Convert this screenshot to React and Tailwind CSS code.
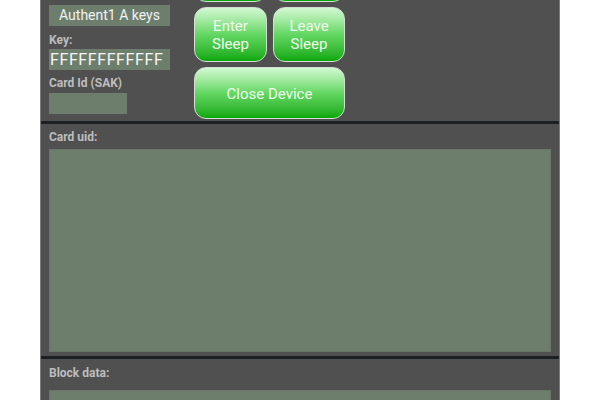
const font = { fontFamily: "Roboto, 'Noto Sans', sans-serif" };

function GreenButton({ className = "", children }) {
  return (
    <div
      className={`flex items-center justify-center rounded-[12px] border-[1.5px] border-[#d6dcd6] bg-gradient-to-b from-[#d2f8d2] via-[#62d762] to-[#05a805] text-center text-[15px] leading-[18px] text-[#eefdee] ${className}`}
    >
      {children}
    </div>
  );
}

function Field({ className = "", children }) {
  return (
    <div className={`bg-[#6d7e6d] ${className}`}>{children}</div>
  );
}

function Label({ children, className = "" }) {
  return (
    <div className={`text-[12px] font-bold leading-[13px] text-[#bdbdbd] ${className}`}>
      {children}
    </div>
  );
}

export default function App() {
  return (
    <div className="w-[600px] h-[400px] overflow-hidden bg-white" style={font}>
      <div className="ml-[40px] flex h-full w-[520px] flex-col border-x border-[#7c7c7c] bg-[#505050]">
        {/* Top: auth keys + device buttons */}
        <div className="flex h-[121px] shrink-0 overflow-hidden pl-[8px]">
          <div className="flex w-[121px] flex-col">
            <Field className="mt-[5px] flex h-[21px] items-center justify-center text-[14px] text-[#f2f2f2]">
              Authent1 A keys
            </Field>
            <Label className="mt-[8px]">Key:</Label>
            <Field className="mt-[2px] flex h-[21px] items-center pl-[1px] text-[16px] tracking-[0.6px] text-[#f6f6f6]">
              FFFFFFFFFFFF
            </Field>
            <Label className="mt-[7px]">Card Id (SAK)</Label>
            <Field className="mt-[3px] h-[21px] w-[78px]" />
          </div>

          <div className="ml-[24px] flex flex-col gap-[5px] -mt-[53px]">
            <div className="flex gap-[6px]">
              <GreenButton className="h-[55px] w-[73px]" />
              <GreenButton className="h-[55px] w-[72px]" />
            </div>
            <div className="flex gap-[6px]">
              <GreenButton className="h-[55px] w-[73px]">
                Enter
                <br />
                Sleep
              </GreenButton>
              <GreenButton className="h-[55px] w-[72px]">
                Leave
                <br />
                Sleep
              </GreenButton>
            </div>
            <GreenButton className="h-[52px] w-[151px] pt-[2px]">Close Device</GreenButton>
          </div>
        </div>

        <div className="h-[3px] shrink-0 bg-[#1d2024]" />

        {/* Card uid */}
        <div className="flex shrink-0 flex-col px-[8px] pt-[7px]">
          <Label>Card uid:</Label>
          <Field className="mt-[5px] h-[203px] border border-[#677667]" />
        </div>

        <div className="mt-[4px] h-[3px] shrink-0 bg-[#1d2024]" />

        {/* Block data */}
        <div className="flex shrink-0 flex-col px-[8px] pt-[8px]">
          <Label>Block data:</Label>
          <Field className="mt-[10px] h-[60px] border border-[#677667]" />
        </div>
      </div>
    </div>
  );
}
